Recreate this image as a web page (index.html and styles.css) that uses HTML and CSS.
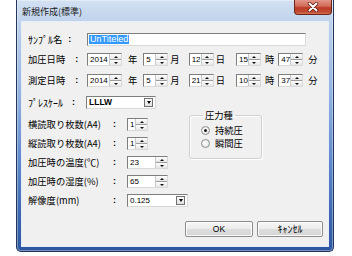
FILE: index.html
```html
<!DOCTYPE html>
<html lang="ja">
<head>
<meta charset="utf-8">
<link rel="stylesheet" href="styles.css">
</head>
<body>
<div class="window">
  <div class="titlebar">
    <span class="title">新規作成(標準)</span>
    <div class="close">
      <svg width="14" height="10" viewBox="0 0 14 10"><path d="M3.5 1.5 L10.5 8.5 M10.5 1.5 L3.5 8.5" stroke="#5a1a10" stroke-width="3.4" stroke-linecap="round"/><path d="M3.5 1.5 L10.5 8.5 M10.5 1.5 L3.5 8.5" stroke="#fff" stroke-width="2" stroke-linecap="round"/></svg>
    </div>
  </div>
  <div class="client">
    <div class="row r1">
      <span class="label top"><span class="hw">ｻﾝﾌﾟﾙ</span>名<span class="colon cs">:</span></span>
      <div class="textbox name"><span class="sel">UnTiteled</span></div>
    </div>
    <div class="row r2">
      <span class="label top">加圧日時<span class="colon cd">:</span></span>
      <div class="spin wy"><span class="val">2014</span><span class="btns"><i class="up"></i><i class="dn"></i></span></div>
      <span class="unit nen">年</span>
      <div class="spin wm"><span class="val">5</span><span class="btns"><i class="up"></i><i class="dn"></i></span></div>
      <span class="unit tsuki">月</span>
      <div class="spin wm"><span class="val">12</span><span class="btns"><i class="up"></i><i class="dn"></i></span></div>
      <span class="unit hi">日</span>
      <div class="spin wm"><span class="val">15</span><span class="btns"><i class="up"></i><i class="dn"></i></span></div>
      <span class="unit ji">時</span>
      <div class="spin wm"><span class="val">47</span><span class="btns"><i class="up"></i><i class="dn"></i></span></div>
      <span class="unit fun">分</span>
    </div>
    <div class="row r3">
      <span class="label top">測定日時<span class="colon cd">:</span></span>
      <div class="spin wy"><span class="val">2014</span><span class="btns"><i class="up"></i><i class="dn"></i></span></div>
      <span class="unit nen">年</span>
      <div class="spin wm"><span class="val">5</span><span class="btns"><i class="up"></i><i class="dn"></i></span></div>
      <span class="unit tsuki">月</span>
      <div class="spin wm"><span class="val">21</span><span class="btns"><i class="up"></i><i class="dn"></i></span></div>
      <span class="unit hi">日</span>
      <div class="spin wm"><span class="val">10</span><span class="btns"><i class="up"></i><i class="dn"></i></span></div>
      <span class="unit ji">時</span>
      <div class="spin wm"><span class="val">37</span><span class="btns"><i class="up"></i><i class="dn"></i></span></div>
      <span class="unit fun">分</span>
    </div>
    <div class="row r4">
      <span class="label top"><span class="hw">ﾌﾟﾚｽｹｰﾙ</span><span class="colon cp">:</span></span>
      <div class="combo wp"><span class="val bold">LLLW</span><span class="arrow"><i></i></span></div>
    </div>
    <div class="lower">
      <div class="leftcol">
        <div class="row">
          <span class="label low">横読取り枚数(A4)</span><span class="colon2">:</span>
          <div class="spin ws"><span class="val">1</span><span class="btns"><i class="up"></i><i class="dn"></i></span></div>
        </div>
        <div class="row">
          <span class="label low">縦読取り枚数(A4)</span><span class="colon2">:</span>
          <div class="spin ws"><span class="val">1</span><span class="btns"><i class="up"></i><i class="dn"></i></span></div>
        </div>
        <div class="row">
          <span class="label low">加圧時の温度(℃)</span><span class="colon2">:</span>
          <div class="spin wt"><span class="val">23</span><span class="btns"><i class="up"></i><i class="dn"></i></span></div>
        </div>
        <div class="row">
          <span class="label low">加圧時の湿度(%)</span><span class="colon2">:</span>
          <div class="spin wt"><span class="val">65</span><span class="btns"><i class="up"></i><i class="dn"></i></span></div>
        </div>
        <div class="row">
          <span class="label low">解像度(mm)</span><span class="colon2">:</span>
          <div class="combo wr"><span class="val">0.125</span><span class="arrow"><i></i></span></div>
        </div>
      </div>
      <fieldset class="group">
        <legend>圧力種</legend>
        <div class="radio"><span class="dot on"></span>持続圧</div>
        <div class="radio"><span class="dot"></span>瞬間圧</div>
      </fieldset>
    </div>
    <div class="buttons">
      <div class="btn ok">OK</div>
      <div class="btn cancel"><span class="hw">ｷｬﾝｾﾙ</span></div>
    </div>
  </div>
</div>
</body>
</html>
```
FILE: styles.css
```css
html, body {
  margin: 0;
  padding: 0;
  background: #ffffff;
}
body {
  width: 352px;
  height: 256px;
  overflow: hidden;
  font-family: "Noto Sans CJK JP", "Noto Sans", sans-serif;
  font-size: 9.3px;
  color: #000;
}
.hw { font-size: 10px; }
.window {
  margin-left: 16px;
  width: 318px;
  height: 252px;
  box-sizing: border-box;
  border: 1px solid #22365e;
  border-top: none;
  border-radius: 0 0 5px 5px;
  padding: 0 4px 4px;
  background: linear-gradient(to bottom, #d3e1f2 0px, #bfd2ec 22px, #95b4e1 90px, #6189cd 160px, #3f67b0 215px, #2d55a2 252px);
  box-shadow: inset 0 0 0 1px rgba(255,255,255,0.35);
  display: flex;
  flex-direction: column;
}
.titlebar {
  height: 21px;
  margin: 0 -4px;
  padding-left: 5px;
  display: flex;
  align-items: flex-start;
}
.title {
  margin-top: 6px;
  line-height: 12px;
  font-size: 9px;
  color: #1a1a1a;
}
.close {
  margin-left: auto;
  margin-right: 1px;
  width: 38px;
  height: 15px;
  box-sizing: border-box;
  border: 1px solid #6b2418;
  border-top: none;
  border-radius: 0 0 4px 4px;
  background: linear-gradient(to bottom, #e2968a 0%, #d06a55 45%, #bd3c27 55%, #c24a32 85%, #d77558 100%);
  display: flex;
  align-items: center;
  justify-content: center;
}
.client {
  height: 226px;
  box-sizing: border-box;
  border: 1px solid #e6edf6;
  background: #f0f0f0;
  padding: 11px 0 0 6px;
}
.row {
  display: flex;
  align-items: center;
  height: 13px;
  white-space: nowrap;
}
.r2 { margin-top: 7px; }
.r3 { margin-top: 8px; }
.r4 { margin-top: 9px; }
.label {
  display: flex;
  align-items: center;
  line-height: 13px;
}
.label.top { width: 59px; }
.label.low { width: 85px; }
.colon { font-family: "Liberation Sans", sans-serif; font-size: 9px; font-weight: bold; }
.cs { margin-left: 6px; }
.cd { margin-left: 10px; }
.cp { margin-left: 9px; }
.colon2 {
  width: 14px;
  font-family: "Liberation Sans", sans-serif;
  font-size: 9px;
  font-weight: bold;
  line-height: 13px;
}
.textbox, .spin, .combo {
  height: 13px;
  box-sizing: border-box;
  border: 1px solid;
  border-color: #7e7e7e #d9d9d9 #d9d9d9 #7e7e7e;
  background: #fff;
  display: flex;
  align-items: stretch;
}
.textbox.name { width: 219px; padding: 1px 1px; }
.sel {
  background: #3399ff;
  color: #fff;
  font-family: "Liberation Sans", sans-serif;
  font-size: 9px;
  line-height: 9px;
  padding: 0 1px;
}
.val {
  flex: 1;
  padding-left: 2px;
  font-family: "Liberation Sans", sans-serif;
  font-size: 8px;
  line-height: 11px;
  color: #000;
}
.val.bold { font-weight: bold; font-size: 8.5px; }
.btns {
  width: 11px;
  display: flex;
  flex-direction: column;
  background: #f4f4f4;
  border-left: 1px solid #c8c8c8;
}
.btns i {
  flex: 1;
  display: flex;
  align-items: center;
  justify-content: center;
  background: linear-gradient(#fdfdfd, #e6e6e6);
}
.btns .up { border-bottom: 1px solid #9c9c9c; }
.btns .up::after {
  content: "";
  border-left: 2px solid transparent;
  border-right: 2px solid transparent;
  border-bottom: 2px solid #111;
}
.btns .dn::after {
  content: "";
  border-left: 2px solid transparent;
  border-right: 2px solid transparent;
  border-top: 2px solid #111;
}
.wy { width: 35px; }
.wm { width: 25px; }
.ws { width: 21px; }
.wt { width: 41px; }
.wp { width: 70px; margin-left: -1px; }
.wr { width: 61px; }
.unit { line-height: 13px; }
.nen { margin: 0 6px 0 6px; }
.tsuki { margin: 0 9px 0 2px; }
.hi { margin: 0 11px 0 2px; }
.ji { margin: 0 4px 0 4px; }
.fun { margin-left: 5px; }
.combo .arrow {
  width: 11px;
  padding: 0 1px 0 0;
  display: flex;
  align-items: center;
  justify-content: center;
}
.combo .arrow i {
  width: 9px;
  height: 9px;
  box-sizing: border-box;
  border: 1px solid #707070;
  background: linear-gradient(#fafafa, #e2e2e2);
  display: flex;
  align-items: center;
  justify-content: center;
}
.combo .arrow i::after {
  content: "";
  border-left: 2.5px solid transparent;
  border-right: 2.5px solid transparent;
  border-top: 3px solid #000;
}
.lower {
  display: flex;
  align-items: flex-start;
  margin-top: 1px;
}
.leftcol {
  width: 161px;
  padding-top: 8px;
  display: flex;
  flex-direction: column;
  gap: 6px;
}
.group {
  margin: 0;
  width: 73px;
  height: 49px;
  box-sizing: border-box;
  border: 1px solid #d0d0d0;
  border-radius: 3px;
  box-shadow: 1px 1px 0 #fff, inset 1px 1px 0 #fff;
  padding: 4px 0 0 11px;
}
.group legend {
  padding: 0 2px;
  margin-left: 2px;
  line-height: 10px;
}
.radio {
  display: flex;
  align-items: center;
  height: 13px;
  line-height: 13px;
}
.dot {
  width: 9px;
  height: 9px;
  box-sizing: border-box;
  border: 1px solid #8d8d8d;
  border-radius: 50%;
  background: radial-gradient(circle at 40% 40%, #ffffff, #dcdcdc);
  margin-right: 5px;
  display: flex;
  align-items: center;
  justify-content: center;
}
.dot.on::after {
  content: "";
  width: 3px;
  height: 3px;
  border-radius: 50%;
  background: #1a1a1a;
}
.buttons {
  margin-top: 14px;
  display: flex;
  justify-content: flex-end;
  gap: 4px;
  padding-right: 5px;
}
.btn {
  width: 68px;
  height: 16px;
  box-sizing: border-box;
  border: 1px solid #8c8c8c;
  border-radius: 2px;
  background: linear-gradient(#f6f6f6 0%, #ececec 50%, #dedede 51%, #d4d4d4 100%);
  box-shadow: inset 0 0 0 1px #fbfbfb;
  display: flex;
  align-items: center;
  justify-content: center;
  line-height: 14px;
  font-size: 9px;
}
.btn.ok { font-family: "Liberation Sans", sans-serif; font-size: 8.5px; }
.btn.cancel { width: 66px; }
```
